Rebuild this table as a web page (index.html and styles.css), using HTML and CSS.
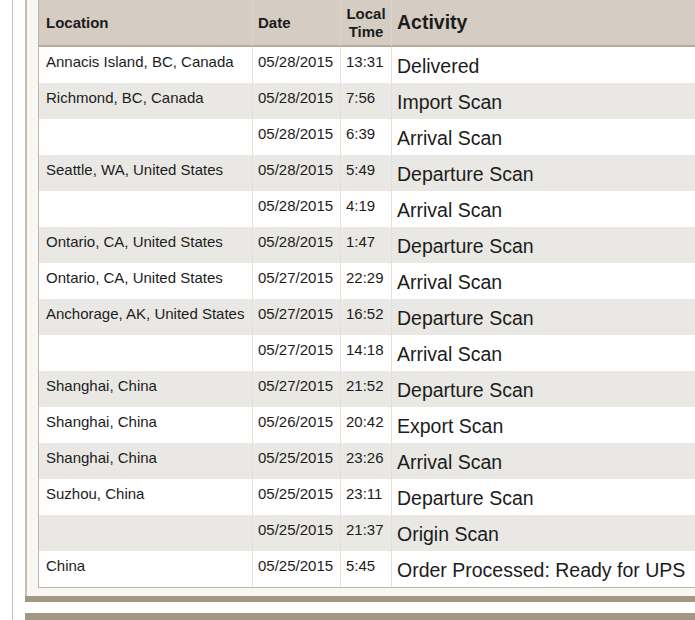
FILE: index.html
```html
<!DOCTYPE html>
<html lang="en">
<head>
<meta charset="utf-8">
<title>Shipment Progress</title>
<link rel="stylesheet" href="styles.css">
</head>
<body>
<div class="page">
  <div class="rail">
    <section class="panel">
      <table class="progress">
        <thead>
          <tr>
            <th class="c-loc">Location</th>
            <th class="c-date">Date</th>
            <th class="c-time">Local<br>Time</th>
            <th class="c-act">Activity</th>
          </tr>
        </thead>
        <tbody>
          <tr><td class="loc">Annacis Island, BC, Canada</td><td>05/28/2015</td><td>13:31</td><td class="act">Delivered</td></tr>
          <tr><td class="loc">Richmond, BC, Canada</td><td>05/28/2015</td><td>7:56</td><td class="act">Import Scan</td></tr>
          <tr><td class="loc"></td><td>05/28/2015</td><td>6:39</td><td class="act">Arrival Scan</td></tr>
          <tr><td class="loc">Seattle, WA, United States</td><td>05/28/2015</td><td>5:49</td><td class="act">Departure Scan</td></tr>
          <tr><td class="loc"></td><td>05/28/2015</td><td>4:19</td><td class="act">Arrival Scan</td></tr>
          <tr><td class="loc">Ontario, CA, United States</td><td>05/28/2015</td><td>1:47</td><td class="act">Departure Scan</td></tr>
          <tr><td class="loc">Ontario, CA, United States</td><td>05/27/2015</td><td>22:29</td><td class="act">Arrival Scan</td></tr>
          <tr><td class="loc">Anchorage, AK, United States</td><td>05/27/2015</td><td>16:52</td><td class="act">Departure Scan</td></tr>
          <tr><td class="loc"></td><td>05/27/2015</td><td>14:18</td><td class="act">Arrival Scan</td></tr>
          <tr><td class="loc">Shanghai, China</td><td>05/27/2015</td><td>21:52</td><td class="act">Departure Scan</td></tr>
          <tr><td class="loc">Shanghai, China</td><td>05/26/2015</td><td>20:42</td><td class="act">Export Scan</td></tr>
          <tr><td class="loc">Shanghai, China</td><td>05/25/2015</td><td>23:26</td><td class="act">Arrival Scan</td></tr>
          <tr><td class="loc">Suzhou, China</td><td>05/25/2015</td><td>23:11</td><td class="act">Departure Scan</td></tr>
          <tr><td class="loc"></td><td>05/25/2015</td><td>21:37</td><td class="act">Origin Scan</td></tr>
          <tr><td class="loc">China</td><td>05/25/2015</td><td>5:45</td><td class="act">Order Processed: Ready for UPS</td></tr>
        </tbody>
      </table>
    </section>
    <div class="bar"></div>
    <div class="bar bar-next"></div>
  </div>
</div>
</body>
</html>
```
FILE: styles.css
```css
html, body {
  margin: 0;
  padding: 0;
  overflow: hidden;
  background: #ffffff;
}

body {
  font-family: "Liberation Sans", Arial, Helvetica, sans-serif;
  color: #1c1c1c;
  width: 695px;
  height: 620px;
}

.page {
  width: 695px;
  height: 620px;
  overflow: hidden;
}

.rail {
  margin-left: 12px;
  border-left: 1px solid #c4bfb7;
  padding-left: 12px;
  height: 640px;
}

.panel {
  border-left: 2px solid #c4bdb3;
  background: #f8f7f4;
  padding: 0 0 8px 11px;
  overflow: hidden;
}

.progress {
  border-collapse: separate;
  border-spacing: 0;
  table-layout: fixed;
  width: 760px;
  border-left: 1px solid #bdb5a9;
  border-bottom: 1px solid #bdb5a9;
}

.progress th,
.progress td {
  box-sizing: border-box;
  padding: 0 5px;
  text-align: left;
  font-size: 15px;
  line-height: 18px;
}

.progress th + th,
.progress td + td {
  border-left: 1px solid #e4e1dc;
}

.progress th + th {
  border-left-color: #ddd6cc;
}

.progress thead th {
  background: #d5cdc1;
  height: 47px;
  font-weight: bold;
  vertical-align: middle;
  border-bottom: 2px solid #b5ab9d;
  padding-top: 1px;
  padding-bottom: 1px;
}

.c-loc { width: 213px; }
.c-date { width: 88px; }
.c-time { width: 51px; }

.progress th.c-loc,
.progress td.loc {
  padding-left: 7px;
}

.progress th.c-time {
  text-align: center;
  padding: 1px 2px 1px;
}

.progress th.c-act {
  font-size: 19.5px;
  line-height: 23px;
}

.progress tbody tr {
  height: 36px;
}

.progress tbody tr:nth-child(odd) td {
  background: #ffffff;
}

.progress tbody tr:nth-child(even) td {
  background: #e9e8e4;
}

.progress tbody td {
  vertical-align: top;
  padding-top: 6px;
  white-space: nowrap;
}

.progress tbody td.act {
  font-size: 19.5px;
  line-height: 23px;
  padding-top: 8px;
}

.bar {
  height: 6px;
  background: #a29785;
}

.bar-next {
  margin-top: 11px;
  height: 8px;
}
```
